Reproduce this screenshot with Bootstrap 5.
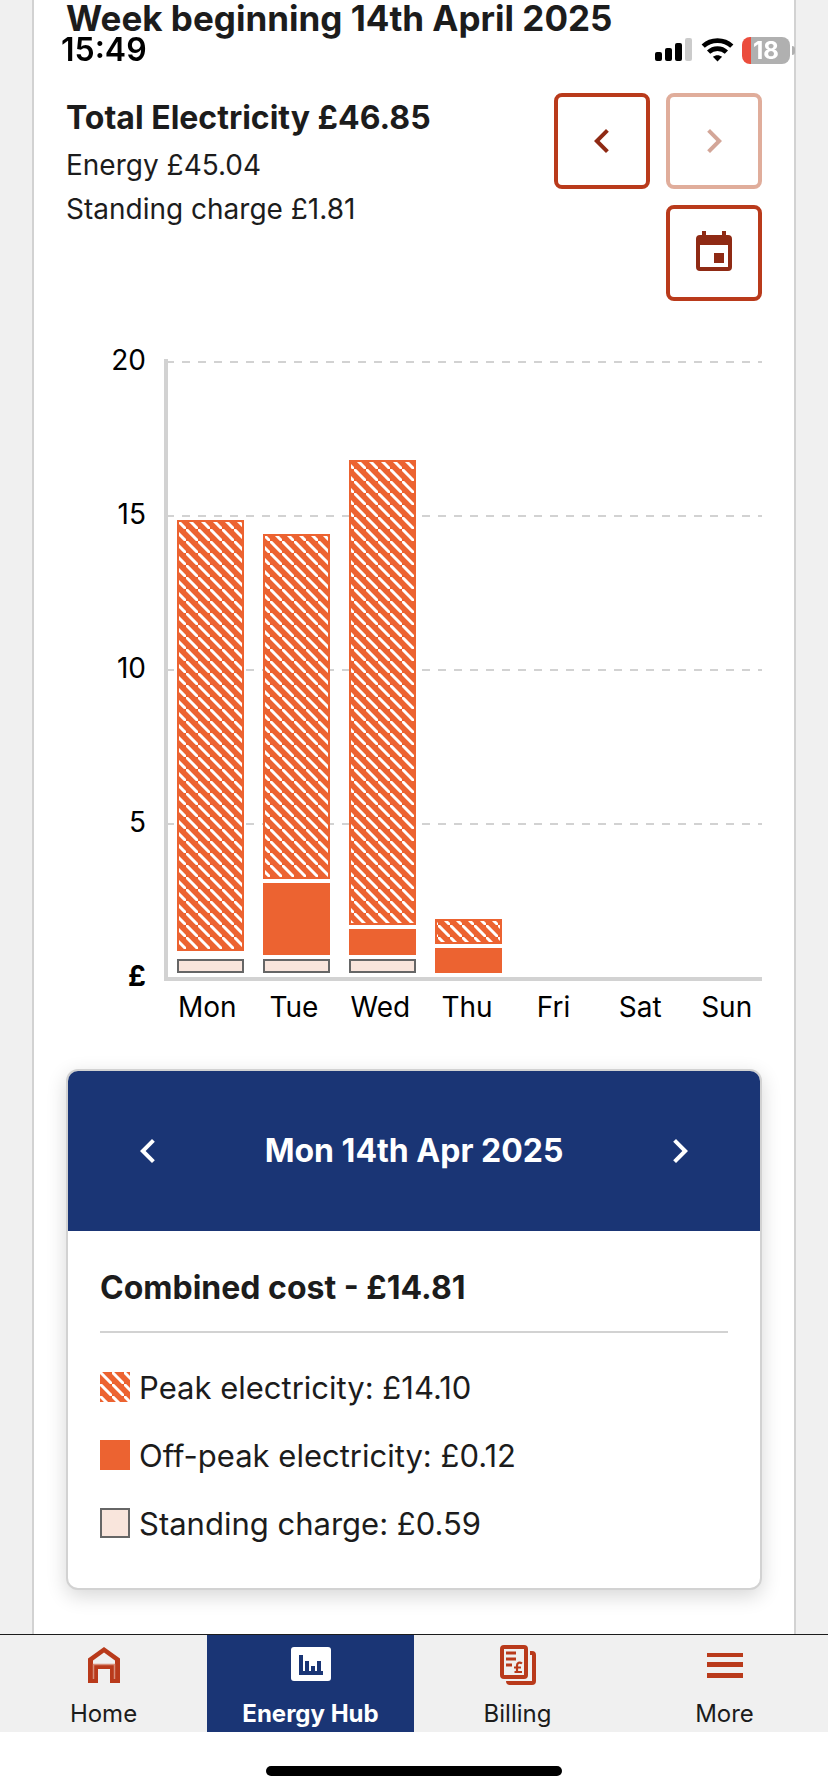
<!DOCTYPE html>
<html lang="en">
<head>
<meta charset="utf-8">
<meta name="viewport" content="width=device-width, initial-scale=1">
<title>Energy Hub</title>
<link href="https://cdn.jsdelivr.net/npm/bootstrap@5.3.0/dist/css/bootstrap.min.css" rel="stylesheet">
<style>
:root{--brand:#b93a1b;--brand-dark:#8f2a14;--navy:#1a3575;--orange:#ec6331;--rule:#d2d2d2;--ink:#1c1c1c;
  --hatch:url("data:image/svg+xml,%3Csvg xmlns='http://www.w3.org/2000/svg' width='12' height='12'%3E%3Crect width='12' height='12' fill='%23ec6331'/%3E%3Cpath d='M0 0L12 12' stroke='white' stroke-width='3'/%3E%3C/svg%3E")}
body{font-family:Inter,"Liberation Sans",sans-serif;font-size:28px;line-height:44px;color:var(--ink);background:#f0f0f0}
svg{display:block}
.panel{background:#fff;border:solid var(--rule);border-width:0 2px;margin:0 32px;padding:0 32px 44px}
.week-title{font-size:35px;line-height:36px;font-weight:700;margin:0 0 57px}
.strong-line{font-size:32px;line-height:50px;font-weight:700;margin:0}
/* phone status bar over the page */
.status-bar{z-index:1030;padding:36px 33px 0 61px;color:#000}
.clock{font-size:32px;line-height:28px;font-weight:600}
.battery{width:48px;height:27px;border-radius:8px;font-size:24px;line-height:27px;font-weight:700;color:#fff;
  background:linear-gradient(90deg,#eb4d3d 9px,#b0b0b0 9px)}
.tip{width:3px;height:9px;border-radius:0 4px 4px 0;background:#b0b0b0;margin-left:2px}
/* week buttons */
.week-nav{width:208px;gap:16px}
.btn-square{width:96px;height:96px;border:4px solid var(--brand);border-radius:8px;color:var(--brand-dark);background:#fff;padding:0;display:grid;place-items:center}
.btn-square:disabled{border-color:#e0ad9b;color:#d3a698}
/* chart */
.chart{display:grid;grid-template-columns:98px minmax(0,1fr);margin-top:58px;color:#000}
.y-axis{margin-top:-21px;padding-right:18px;height:643px;text-align:right}
.y-axis div{height:154px}
.plot{height:622px;border:solid var(--rule);border-width:0 0 4px 4px}
.gridlines{inset:2px 0 0 0}
.gridlines div{height:154px;background:repeating-linear-gradient(90deg,var(--rule) 0 8px,transparent 8px 16px) -2px 0/calc(100% + 2px) 2px no-repeat}
.week-cols{display:grid;grid-template-columns:repeat(7,minmax(0,1fr));margin-right:-8px}
.stack{display:flex;flex-direction:column;justify-content:flex-end;gap:4px;padding:0 10px 4px 9px}
.seg-peak{border:2px solid var(--orange);background:var(--hatch) 6px 1px fixed}
.seg-off{background:var(--orange)}
.seg-fixed{background:#f9e5dc;border:2px solid #666}
.x-axis{grid-column:2;padding-top:4px;text-align:center}
/* day card */
.day-card{margin-top:40px;border:2px solid var(--rule);border-radius:12px;box-shadow:0 6px 20px rgba(0,0,0,.16);color:var(--ink)}
.day-head{height:160px;padding:0 32px;background:var(--navy);color:#fff;border-radius:10px 10px 0 0}
.day-head button{width:96px;height:96px;border:0;background:none;color:#fff;display:grid;place-items:center;padding:0}
.day-body{padding:32px 32px 39px}
.day-total{padding-bottom:18px;border-bottom:2px solid var(--rule)}
.key-list{margin:30px 0 0;font-size:31px;line-height:50px;gap:18px}
.key-list li{gap:9px}
.swatch{width:30px;height:30px;flex:none;margin-top:9px}
.swatch-peak{background:var(--hatch)}
/* tabs */
.tab-bar{border-top:1px solid var(--ink);background:#f0f0f0}
.tab-bar a{padding:10px 0 1px;font-size:24px;line-height:34px;color:var(--ink);text-decoration:none;display:flex;flex-direction:column;align-items:center;gap:12px;flex:1 1 0}
.tab-bar svg{color:var(--brand)}
.tab-bar a.active{background:var(--navy);color:#fff;font-weight:700}
.home-strip{background:#fff;padding:34px 0 16px}
.home-strip div{width:296px;height:10px;border-radius:5px;background:#000}
</style>
</head>
<body class="d-flex flex-column min-vh-100">
<div class="status-bar position-fixed top-0 start-0 end-0 d-flex align-items-center justify-content-between">
  <span class="clock">15:49</span>
  <div class="d-flex align-items-center">
    <svg class="me-2" width="38" height="24" viewBox="0 0 38 24" aria-label="Signal"><rect y="14" width="7" height="9" rx="2"/><rect x="10" y="10" width="7" height="13" rx="2"/><rect x="20" y="5" width="7" height="18" rx="2"/><rect x="30" width="7" height="23" rx="2" fill="#cbcbcb"/></svg>
    <svg class="me-2" width="33" height="24" viewBox="0 0 33 24" fill="none" stroke="#000" stroke-width="4.6" aria-label="Wi-Fi"><path d="M2.2 8.2C10 .7 23 .7 30.800 8.200"/><path d="M7.600 14.200C12.500 9.400 20.500 9.400 25.400 14.200"/><path d="M16.500 23.500l-4.600-4.700c2.700-2.200 6.500-2.200 9.200 0z" fill="#000" stroke="none"/></svg>
    <div class="battery text-center">18</div>
    <div class="tip"></div>
  </div>
</div>

<main class="panel flex-grow-1">
  <h1 class="week-title">Week beginning 14th April 2025</h1>
  <div class="d-flex justify-content-between align-items-start">
    <div>
      <h2 class="strong-line">Total Electricity £46.85</h2>
      <p class="m-0">Energy £45.04</p>
      <p class="m-0">Standing charge £1.81</p>
    </div>
    <div class="week-nav d-flex flex-wrap justify-content-end">
      <button class="btn-square" type="button" aria-label="Previous week"><svg width="48" height="48" viewBox="0 0 24 24" fill="currentColor"><path d="M15.410 7.410L14 6l-6 6 6 6 1.410-1.410L10.830 12z"/></svg></button>
      <button class="btn-square" type="button" aria-label="Next week" disabled><svg width="48" height="48" viewBox="0 0 24 24" fill="currentColor"><path d="M10 6L8.590 7.410 13.170 12l-4.580 4.590L10 18l6-6z"/></svg></button>
      <button class="btn-square" type="button" aria-label="Choose date"><svg width="48" height="48" viewBox="0 0 48 48" fill="currentColor"><path d="M12 2h4v4h16V2h4v4h2a4 4 0 0 1 4 4v28a4 4 0 0 1-4 4H10a4 4 0 0 1-4-4V10a4 4 0 0 1 4-4h2zM10 16v22h28V16zM24 24h10v10H24z" fill-rule="evenodd"/></svg></button>
    </div>
  </div>

  <section class="chart" aria-label="Daily electricity cost in pounds">
    <div class="y-axis"><div>20</div><div>15</div><div>10</div><div>5</div><b>£</b></div>
    <div class="plot position-relative">
      <div class="gridlines position-absolute"><div></div><div></div><div></div><div></div></div>
      <div class="week-cols position-relative h-100">
        <div class="stack"><div class="seg-peak" style="height:431px"></div><div class="seg-off" style="height:0px"></div><div class="seg-fixed" style="height:14px"></div></div>
        <div class="stack"><div class="seg-peak" style="height:345px"></div><div class="seg-off" style="height:72px"></div><div class="seg-fixed" style="height:14px"></div></div>
        <div class="stack"><div class="seg-peak" style="height:465px"></div><div class="seg-off" style="height:26px"></div><div class="seg-fixed" style="height:14px"></div></div>
        <div class="stack"><div class="seg-peak" style="height:25px"></div><div class="seg-off" style="height:25px"></div></div>
      </div>
    </div>
    <div class="x-axis week-cols"><span>Mon</span><span>Tue</span><span>Wed</span><span>Thu</span><span>Fri</span><span>Sat</span><span>Sun</span></div>
  </section>

  <section class="card day-card">
    <div class="day-head d-flex align-items-center justify-content-between">
      <button type="button" aria-label="Previous day"><svg width="48" height="48" viewBox="0 0 24 24" fill="currentColor"><path d="M15.410 7.410L14 6l-6 6 6 6 1.410-1.410L10.830 12z"/></svg></button>
      <h2 class="strong-line">Mon 14th Apr 2025</h2>
      <button type="button" aria-label="Next day"><svg width="48" height="48" viewBox="0 0 24 24" fill="currentColor"><path d="M10 6L8.590 7.410 13.170 12l-4.580 4.590L10 18l6-6z"/></svg></button>
    </div>
    <div class="day-body">
      <h3 class="strong-line day-total">Combined cost - £14.81</h3>
      <ul class="key-list list-unstyled d-flex flex-column">
        <li class="d-flex align-items-start"><span class="swatch swatch-peak"></span>Peak electricity: £14.10</li>
        <li class="d-flex align-items-start"><span class="swatch seg-off"></span>Off-peak electricity: £0.12</li>
        <li class="d-flex align-items-start"><span class="swatch seg-fixed"></span>Standing charge: £0.59</li>
      </ul>
    </div>
  </section>
</main>

<footer class="sticky-bottom">
  <nav class="tab-bar d-flex">
    <a href="#home"><svg width="40" height="40" viewBox="0 0 40 40"><path d="M20 2l16 11.500V38H26V24H14v14H4V13.500zM20 7.500L9 15.500V19h22v-3.500z" fill="currentColor" fill-rule="evenodd"/><path d="M9.500 34V19.500h21V34" fill="none" stroke="#d88d78" stroke-width="1.500"/></svg>Home</a>
    <a href="#hub" class="active" aria-current="page"><svg width="40" height="40" viewBox="0 0 40 40"><rect y="2" width="40" height="34" rx="3" fill="#fff"/><path d="M8 10h4v16h2V16h4v10h2v-5h4v5h2V16h4v10h2v4H8z" fill="#1a3575"/></svg>Energy Hub</a>
    <a href="#billing"><svg width="40" height="40" viewBox="0 0 40 40"><rect x="4" y="2" width="24" height="30" rx="2" fill="none" stroke="currentColor" stroke-width="4"/><path d="M32 8h2a2 2 0 0 1 2 2v26a2 2 0 0 1-2 2H12a2 2 0 0 1-2-2" fill="none" stroke="currentColor" stroke-width="4"/><path d="M8 8h10M8 14h10M8 20h6" stroke="currentColor" stroke-width="3"/><path d="M24 18.500c-2.500-2-5-.5-5 2v6.500h-2.500M16 22.500h7M16.500 27H24" fill="none" stroke="currentColor" stroke-width="2.200"/></svg>Billing</a>
    <a href="#more"><svg width="40" height="40" viewBox="0 0 40 40"><path d="M2 8h36v4H2zM2 17h36v5H2zM2 28h36v5H2z" fill="currentColor"/></svg>More</a>
  </nav>
  <div class="home-strip"><div class="mx-auto"></div></div>
</footer>
<script src="https://cdn.jsdelivr.net/npm/bootstrap@5.3.0/dist/js/bootstrap.bundle.min.js"></script>
</body>
</html>
